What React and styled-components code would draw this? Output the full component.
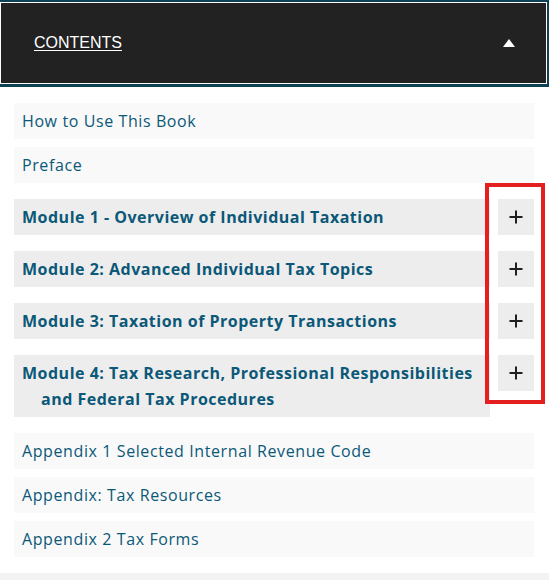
import React from "react";
import styled, { createGlobalStyle } from "styled-components";

const Global = createGlobalStyle`
  html, body { margin: 0; padding: 0; background: #fff; }
  body { font-family: "Open Sans", "Noto Sans", sans-serif; }
  #root { position: relative; min-height: 580px; }
`;

const Page = styled.div`
  position: relative;
  width: 549px;
  min-height: 580px;
  display: flex;
  flex-direction: column;
`;

const Header = styled.div`
  border: 2px solid #0e4155;
  border-bottom-width: 3px;
  border-left: 0;
  padding: 1px;
  background: #fff;
`;

const HeaderBar = styled.div`
  height: 80px;
  background: #222222;
  display: flex;
  align-items: center;
  justify-content: space-between;
  padding: 0 31px 0 33px;
`;

const HeaderTitle = styled.a`
  font-family: "Liberation Sans", Arial, sans-serif;
  font-size: 16px;
  color: #fff;
  text-decoration: underline;
  text-underline-offset: 2px;
`;

const Toc = styled.ul`
  list-style: none;
  margin: 0 15px 0 14px;
  padding: 0;
  flex: 1;
`;

const Item = styled.li`
  margin: 8px 0;
  &:first-child { margin-top: 16px; }
`;

const ModuleItem = styled.li`
  margin: 16px 0;
  display: flex;
  align-items: flex-start;
  gap: 8px;
`;

const Link = styled.a`
  display: block;
  background: ${(p) => (p.$module ? "#ededed" : "#f9f9f9")};
  color: #0b5878;
  font-size: 16px;
  font-weight: ${(p) => (p.$module ? 700 : 400)};
  letter-spacing: ${(p) => (p.$module ? "0.5px" : "0.6px")};
  line-height: 26px;
  padding: 5px 8px 5px 27px;
  text-indent: -19px;
  text-decoration: none;
  flex: 1;
`;

const PlusButton = styled.button`
  flex: 0 0 36px;
  width: 36px;
  height: 36px;
  border: 0;
  padding: 0;
  background: #ededed;
  display: flex;
  align-items: center;
  justify-content: center;
  cursor: pointer;
`;

const Footer = styled.div`
  height: 7px;
  background: #f3f3f3;
  margin-top: 8px;
`;

const Annotation = styled.div`
  position: absolute;
  left: 485px;
  top: 183px;
  width: 60px;
  height: 221px;
  box-sizing: border-box;
  border: 4px solid #e3201f;
  pointer-events: none;
`;

const Plus = () => (
  <svg width="14" height="14" viewBox="0 0 14 14">
    <path d="M7 0.5V13.5M0.5 7H13.5" stroke="#1f1f1f" strokeWidth="2" fill="none" />
  </svg>
);

const Caret = () => (
  <svg width="12" height="8" viewBox="0 0 12 8">
    <path d="M6 0L12 8H0Z" fill="#fff" />
  </svg>
);

const pages = ["How to Use This Book", "Preface"];
const modules = [
  "Module 1 - Overview of Individual Taxation",
  "Module 2: Advanced Individual Tax Topics",
  "Module 3: Taxation of Property Transactions",
  "Module 4: Tax Research, Professional Responsibilities and Federal Tax Procedures",
];
const appendices = [
  "Appendix 1 Selected Internal Revenue Code",
  "Appendix: Tax Resources",
  "Appendix 2 Tax Forms",
];

export default function App() {
  return (
    <>
      <Global />
      <Page>
        <Header>
          <HeaderBar>
            <HeaderTitle href="#">CONTENTS</HeaderTitle>
            <Caret />
          </HeaderBar>
        </Header>
        <Toc>
          {pages.map((t) => (
            <Item key={t}>
              <Link href="#">{t}</Link>
            </Item>
          ))}
          {modules.map((t) => (
            <ModuleItem key={t}>
              <Link href="#" $module>
                {t}
              </Link>
              <PlusButton aria-label="Expand">
                <Plus />
              </PlusButton>
            </ModuleItem>
          ))}
          {appendices.map((t) => (
            <Item key={t}>
              <Link href="#">{t}</Link>
            </Item>
          ))}
        </Toc>
        <Footer />
        <Annotation />
      </Page>
    </>
  );
}
